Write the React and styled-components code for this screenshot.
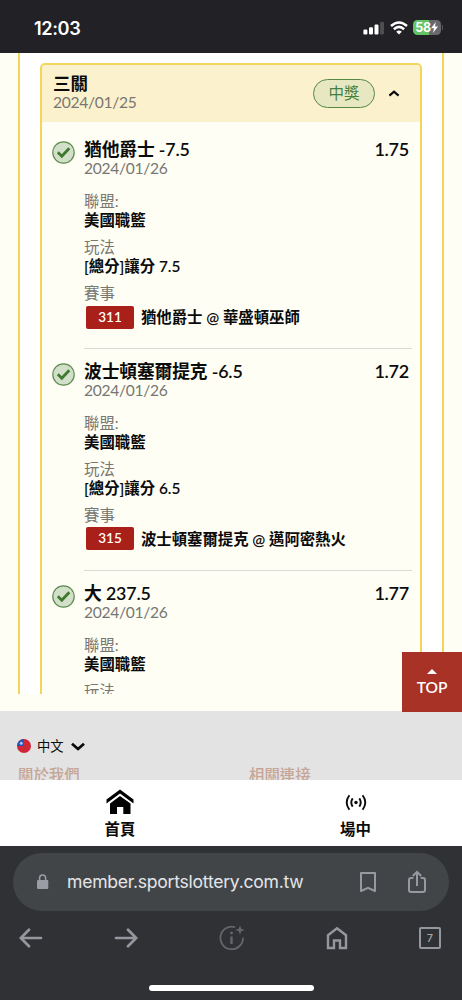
import React from "react";
import styled, { createGlobalStyle } from "styled-components";

const GlobalStyle = createGlobalStyle`
  * { box-sizing: border-box; }
  body {
    margin: 0;
    background: #303135;
    font-family: Lato, "Noto Sans CJK TC", sans-serif;
    color: #0b0b0b;
  }
`;

const Screen = styled.div`
  position: relative;
  width: 462px;
  height: 1000px;
  display: flex;
  flex-direction: column;
  overflow: hidden;
`;

const StatusBar = styled.header`
  flex: none;
  height: 53px;
  padding: 2px 19px 0 34px;
  display: flex;
  align-items: center;
  justify-content: space-between;
  background: #212126;
`;

const Clock = styled.span`
  font: 600 18.2px/24px Inter, sans-serif;
  letter-spacing: -0.4px;
  color: #fff;
`;

const StatusIcons = styled.div`
  display: flex;
  align-items: center;
  gap: 5px;
`;

const Battery = styled.div`
  display: flex;
  align-items: center;
  gap: 1px;
`;

const BatteryBody = styled.div`
  width: 28px;
  height: 15px;
  border-radius: 4.5px;
  display: flex;
  align-items: center;
  justify-content: center;
  background: linear-gradient(90deg, #62c466 58%, #69696d 58%);
  color: #fff;
  font: 700 12.5px/15px Inter, sans-serif;
  letter-spacing: -0.4px;
`;

const BatteryTip = styled.div`
  width: 1.5px;
  height: 5px;
  border-radius: 0 2px 2px 0;
  background: #5a5a5e;
`;

const Content = styled.main`
  flex: none;
  height: 658px;
  padding: 0 18px 17px;
  background: #fefef5;
`;

const Panel = styled.section`
  height: 641px;
  overflow: hidden;
  padding: 10px 20px 0;
  border: solid #f2d65b;
  border-width: 0 2px;
  background: #fff;
`;

const Ticket = styled.article`
  height: 900px;
  border: 2px solid #f2d65b;
  border-radius: 5px;
  background: #fefef5;
  overflow: hidden;
`;

const TicketHeader = styled.div`
  height: 57px;
  margin-bottom: 5px;
  padding: 0 20px 0 11px;
  display: flex;
  align-items: center;
  background: #fcf1cd;
`;

const TicketTitle = styled.div`
  flex: 1;
  padding-bottom: 2px;
  font-size: 17.5px;
  font-weight: 600;
  line-height: 20px;
`;

const DateText = styled.div`
  font-size: 15.6px;
  font-weight: 400;
  line-height: 17px;
  letter-spacing: -0.3px;
  color: #777672;
`;

const Status = styled.span`
  width: 62px;
  height: 29px;
  margin-right: 13px;
  padding-bottom: 1px;
  border: 1.2px solid #568745;
  border-radius: 15px;
  display: grid;
  place-items: center;
  background: #e7e8c2;
  color: #45803c;
  font-size: 15.5px;
  line-height: 20px;
`;

const Selection = styled.section`
  height: 221.8px;
  padding: 12px 0 0 10px;
  display: flex;
  gap: 9px;
`;

const Tick = styled.svg`
  flex: none;
  margin-top: 2px;
`;

const Details = styled.div`
  width: 328px;
  margin-right: 8px;
  border-bottom: 1px solid #dbdbd5;
`;

const Headline = styled.div`
  display: flex;
  justify-content: space-between;
  padding-right: 3px;
  font-size: 17.8px;
  font-weight: 600;
  line-height: 21px;
  letter-spacing: -0.15px;
  white-space: nowrap;
`;

const Odds = styled.span`
  font-size: 18px;
  letter-spacing: -0.25px;
`;

const Fields = styled.div`
  margin-top: 15px;
  display: grid;
  gap: 8px;
`;

const Label = styled.div`
  font-size: 15.4px;
  line-height: 19px;
  color: #777672;
`;

const Value = styled.div`
  font-size: 15.4px;
  font-weight: 600;
  line-height: 19px;
`;

const Match = styled.div`
  display: flex;
  align-items: center;
  gap: 7px;
  height: 24px;
  margin: 2px 0 0 2px;
  font-size: 15.4px;
  font-weight: 600;
  white-space: nowrap;
`;

const MatchName = styled.span`
  padding-bottom: 2px;
  letter-spacing: -0.03px;
`;

const Code = styled.span`
  width: 48px;
  height: 23px;
  border-radius: 2px;
  background: #a91f19;
  color: #fff;
  font-size: 13.5px;
  line-height: 23px;
  text-align: center;
`;

const TopButton = styled.button`
  position: absolute;
  right: 0;
  top: 652px;
  width: 60px;
  height: 60px;
  padding: 17px 0 0;
  border: 0;
  display: flex;
  flex-direction: column;
  align-items: center;
  gap: 2px;
  background: #a83226;
  color: #fff;
  font: 600 15.5px/22px Lato, sans-serif;
`;

const Footer = styled.footer`
  flex: none;
  height: 69px;
  padding: 24px 18px 0 17px;
  overflow: hidden;
  background: #e3e3e3;
`;

const Language = styled.div`
  display: flex;
  align-items: center;
  height: 22px;
  font-size: 13.3px;
  gap: 6px;
`;

const LanguageName = styled.span`
  margin-right: 1px;
  line-height: 20px;
`;

const FooterLinks = styled.div`
  display: grid;
  grid-template-columns: 231px 1fr;
  margin: 7px 0 0 1px;
  font-size: 15.4px;
  font-weight: 500;
  line-height: 22px;
  color: #c5a698;
`;

const TabBar = styled.nav`
  flex: none;
  height: 66px;
  padding: 0 3px 0 4px;
  display: grid;
  grid-template-columns: 232px 1fr;
  background: #fff;
`;

const Tab = styled.div`
  display: flex;
  flex-direction: column;
  align-items: center;
  padding-top: 9px;
  gap: 3px;
  font-size: 15.4px;
  font-weight: 600;
  line-height: 24px;
  margin-right: ${(p) => p.$inset || 0}px;
`;

const Browser = styled.section`
  flex: 1;
  padding: 7px 13px 0;
  background: #303135;
`;

const AddressBar = styled.div`
  height: 58px;
  padding: 0 22px;
  border-radius: 29px;
  display: flex;
  align-items: center;
  background: #424548;
`;

const Address = styled.span`
  flex: 1;
  margin-left: 17px;
  font: 400 17.6px/24px Inter, sans-serif;
  letter-spacing: -0.27px;
  color: #e4e5e8;
`;

const AddressActions = styled.div`
  display: flex;
  align-items: center;
  gap: 30px;
`;

const Toolbar = styled.div`
  height: 54px;
  padding: 0 8px 0 6px;
  display: flex;
  align-items: center;
  justify-content: space-between;
`;

const AssistantIcon = styled.svg`
  margin: 0 10px;
`;

const TabCount = styled.span`
  width: 22px;
  height: 22px;
  border: 2px solid #95979e;
  border-radius: 2px;
  color: #a2a4aa;
  font: 500 11px/18px Inter, sans-serif;
  text-align: center;
`;

const HomeIndicator = styled.div`
  width: 165px;
  height: 6px;
  margin: 20px auto 0;
  border-radius: 3px;
  background: #fff;
`;

const selections = [
  { title: "猶他爵士 -7.5", odds: "1.75", play: "[總分]讓分 7.5", code: "311", match: "猶他爵士 @ 華盛頓巫師" },
  { title: "波士頓塞爾提克 -6.5", odds: "1.72", play: "[總分]讓分 6.5", code: "315", match: "波士頓塞爾提克 @ 邁阿密熱火" },
  { title: "大 237.5", odds: "1.77", play: "", code: "", match: "" },
];

function SelectionRow({ item }) {
  return (
    <Selection>
      <Tick width="23" height="23" viewBox="0 0 23 23" fill="none">
        <circle cx="11.5" cy="11.5" r="10.7" fill="#d3e0c9" stroke="#5e8d50" strokeWidth="1.2" />
        <path d="M5.8 11.3L9.8 15.2L17.3 7.2" stroke="#3f7930" strokeWidth="2.8" />
      </Tick>
      <Details>
        <Headline>
          <span>{item.title}</span>
          <Odds>{item.odds}</Odds>
        </Headline>
        <DateText>2024/01/26</DateText>
        <Fields>
          <div>
            <Label>聯盟:</Label>
            <Value>美國職籃</Value>
          </div>
          <div>
            <Label>玩法</Label>
            <Value>{item.play}</Value>
          </div>
          {item.code && (
            <div>
              <Label>賽事</Label>
              <Match>
                <Code>{item.code}</Code>
                <MatchName>{item.match}</MatchName>
              </Match>
            </div>
          )}
        </Fields>
      </Details>
    </Selection>
  );
}

export default function App() {
  return (
    <Screen>
      <GlobalStyle />
      <StatusBar>
        <Clock>12:03</Clock>
        <StatusIcons>
          <svg width="22" height="14" viewBox="0 0 22 14" fill="#fff">
            <rect x="0.4" y="8.5" width="4" height="5" rx="1.2" />
            <rect x="6" y="6.3" width="4" height="7.2" rx="1.2" />
            <rect x="11.5" y="3.5" width="4" height="10" rx="1.2" />
            <rect x="17" y="0.7" width="4" height="12.8" rx="1.2" fill="#4d4d52" />
          </svg>
          <svg width="18" height="14" viewBox="0 0 18 14" fill="none" stroke="#fff" strokeWidth="2.5">
            <path d="M1 5Q9-2 17 5" />
            <path d="M3.9 8.2Q9 3.6 14.1 8.2" />
            <path d="M9 13.5L6.2 10.7Q9 8.4 11.8 10.7Z" fill="#fff" stroke="none" />
          </svg>
          <Battery>
            <BatteryBody>
              58
              <svg width="7" height="11" viewBox="0 0 7 11" fill="#fff">
                <path d="M4.8 0L0 6.2H3L2 11L7 4.6H4Z" />
              </svg>
            </BatteryBody>
            <BatteryTip />
          </Battery>
        </StatusIcons>
      </StatusBar>

      <Content>
        <Panel>
          <Ticket>
            <TicketHeader>
              <TicketTitle>
                三關
                <DateText>2024/01/25</DateText>
              </TicketTitle>
              <Status>中獎</Status>
              <svg width="12" height="8" viewBox="0 0 12 8" fill="none" stroke="#0b0b0b" strokeWidth="2.2">
                <path d="M1.4 5.6L6 1.6L10.6 5.6" />
              </svg>
            </TicketHeader>
            {selections.map((item) => (
              <SelectionRow key={item.title} item={item} />
            ))}
          </Ticket>
        </Panel>
      </Content>

      <Footer>
        <Language>
          <svg width="14" height="14" viewBox="0 0 14 14">
            <circle cx="7" cy="7" r="7" fill="#cf2735" />
            <path d="M7 0A7 7 0 0 0 0 7H7Z" fill="#2454b8" />
            <circle cx="4.3" cy="4.2" r="1.5" fill="#a9c4ee" />
          </svg>
          <LanguageName>中文</LanguageName>
          <svg width="14" height="9" viewBox="0 0 14 9" fill="none" stroke="#0b0b0b" strokeWidth="2.7">
            <path d="M1 1.7L7 7L13 1.7" />
          </svg>
        </Language>
        <FooterLinks>
          <span>關於我們</span>
          <span>相關連接</span>
        </FooterLinks>
      </Footer>

      <TabBar>
        <Tab>
          <svg width="28" height="25" viewBox="0 0 28 25">
            <path d="M.5 10.6L14 .6L27.5 10.6V14.6L14 4.6L.5 14.6Z" />
            <path d="M4 14.4L14 7L24.5 14.4V25H17.3V18H11V25H4Z" />
          </svg>
          首頁
        </Tab>
        <Tab $inset={-16}>
          <svg width="22" height="25" viewBox="0 0 22 25" fill="none" stroke="#0b0b0b" strokeWidth="1.9">
            <circle cx="11" cy="13.5" r="1.7" fill="#0b0b0b" stroke="none" />
            <path d="M7.7 9.4Q4.8 13.5 7.7 17.6M14.3 9.4Q17.2 13.5 14.3 17.6M4.4 6.2Q-1 13.5 4.4 20.8M17.6 6.2Q23 13.5 17.6 20.8" />
          </svg>
          場中
        </Tab>
      </TabBar>

      <Browser>
        <AddressBar>
          <svg width="15" height="16" viewBox="0 0 15 16" fill="none">
            <rect x="2" y="6" width="11.3" height="9" rx="1.2" fill="#9b9da5" />
            <path d="M4.6 6.5V4A3 3 0 0 1 10.6 4V6.5" stroke="#9b9da5" strokeWidth="1.6" />
          </svg>
          <Address>member.sportslottery.com.tw</Address>
          <AddressActions>
            <svg width="18" height="22" viewBox="0 0 18 22" fill="none" stroke="#9799a0" strokeWidth="2">
              <path d="M2 2H16V20L9 16.8L2 20Z" strokeLinejoin="round" />
            </svg>
            <svg width="20" height="24" viewBox="0 0 20 24" fill="none" stroke="#9799a0" strokeWidth="2">
              <path d="M6.3 8H4Q2 8 2 10V20Q2 22 4 22H16Q18 22 18 20V10Q18 8 16 8H13.7M10 16V2M5.8 6L10 1.8L14.2 6" />
            </svg>
          </AddressActions>
        </AddressBar>
        <Toolbar>
          <svg width="24" height="20" viewBox="0 0 24 20" fill="none" stroke="#95979e" strokeWidth="2.7" strokeLinecap="round">
            <path d="M22 10H2M10 1.8L1.8 10L10 18.2" />
          </svg>
          <svg width="24" height="20" viewBox="0 0 24 20" fill="none" stroke="#95979e" strokeWidth="2.7" strokeLinecap="round">
            <path d="M2 10H22M14 1.8L22.2 10L14 18.2" />
          </svg>
          <AssistantIcon width="26" height="26" viewBox="0 0 26 26" fill="none" stroke="#65666c" strokeWidth="1.8">
            <path d="M16 2.1A11.3 11.3 0 1 0 24 12.8" />
            <path d="M12.5 11.5V19" strokeWidth="2.4" />
            <path d="M11.2 8H13.8" strokeWidth="2.4" />
            <path d="M21 .2L22.2 3.8L25.8 5L22.2 6.2L21 9.8L19.8 6.2L16.2 5L19.8 3.8Z" fill="#65666c" stroke="none" />
          </AssistantIcon>
          <svg width="22" height="24" viewBox="0 0 22 24" fill="none" stroke="#95979e" strokeWidth="2.4">
            <path d="M2 9.2L11 2.3L20 9.2V22H14V14.5H8V22H2Z" />
          </svg>
          <TabCount>7</TabCount>
        </Toolbar>
        <HomeIndicator />
      </Browser>

      <TopButton>
        <svg width="10" height="5" viewBox="0 0 10 5" fill="#fff">
          <path d="M0 5L5 0L10 5Z" />
        </svg>
        TOP
      </TopButton>
    </Screen>
  );
}
